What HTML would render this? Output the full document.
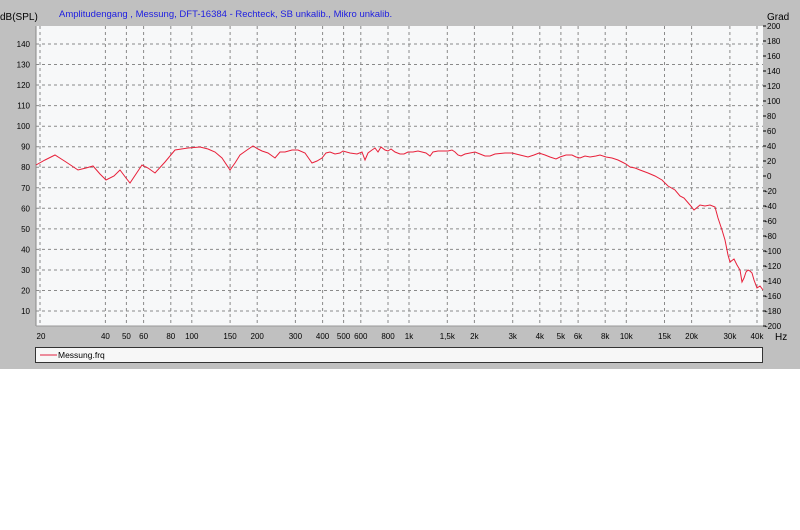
<!DOCTYPE html>
<html><head><meta charset="utf-8"><style>
body{margin:0;width:800px;height:525px;background:#fff;overflow:hidden}
svg text{font-family:"Liberation Sans",sans-serif}
</style></head><body>
<svg width="800" height="525" xmlns="http://www.w3.org/2000/svg">
<rect x="0" y="0" width="800" height="369" fill="#c0c0c0"/>
<rect x="36" y="26" width="727" height="300" fill="#f7f8f9"/>
<line x1="36" y1="26" x2="36" y2="326" stroke="#888"/>
<line x1="36" y1="326" x2="763" y2="326" stroke="#999"/>
<g stroke="#8a8a8a" stroke-dasharray="3,3" stroke-width="1">
<path d="M40,26V326M105.4,26V326M126.4,26V326M143.6,26V326M170.8,26V326M191.8,26V326M230.1,26V326M257.2,26V326M295.4,26V326M322.6,26V326M343.6,26V326M360.8,26V326M388,26V326M409,26V326M447.3,26V326M474.4,26V326M512.7,26V326M539.8,26V326M560.9,26V326M578.1,26V326M605.2,26V326M626.3,26V326M664.5,26V326M691.6,26V326M729.9,26V326M757,26V326"/>
<path d="M36,44H763M36,64.5H763M36,85H763M36,105.6H763M36,126.2H763M36,146.7H763M36,167.2H763M36,187.8H763M36,208.3H763M36,228.9H763M36,249.4H763M36,270H763M36,290.5H763M36,311H763"/>
</g>
<g font-size="8" fill="#000" text-anchor="end">
<text x="30" y="47">140</text><text x="30" y="67.5">130</text><text x="30" y="88">120</text><text x="30" y="108.6">110</text><text x="30" y="129.2">100</text><text x="30" y="149.7">90</text><text x="30" y="170.2">80</text><text x="30" y="190.8">70</text><text x="30" y="211.3">60</text><text x="30" y="231.9">50</text><text x="30" y="252.4">40</text><text x="30" y="273">30</text><text x="30" y="293.5">20</text><text x="30" y="314">10</text>
</g>
<g font-size="8" fill="#000">
<text x="767" y="29">200</text><text x="767" y="44">180</text><text x="767" y="59">160</text><text x="767" y="74">140</text><text x="767" y="89">120</text><text x="767" y="104">100</text><text x="767" y="119">80</text><text x="767" y="134">60</text><text x="767" y="149">40</text><text x="767" y="164">20</text><text x="767" y="179">0</text><text x="765" y="194">-20</text><text x="765" y="209">-40</text><text x="765" y="224">-60</text><text x="765" y="239">-80</text><text x="765" y="254">-100</text><text x="765" y="269">-120</text><text x="765" y="284">-140</text><text x="765" y="299">-160</text><text x="765" y="314">-180</text><text x="765" y="329">-200</text>
</g>
<g stroke="#000"><path d="M763,26h3M763,41h3M763,56h3M763,71h3M763,86h3M763,101h3M763,116h3M763,131h3M763,146h3M763,161h3M763,176h3M763,191h3M763,206h3M763,221h3M763,236h3M763,251h3M763,266h3M763,281h3M763,296h3M763,311h3M763,326h3"/></g>
<g font-size="8" fill="#000" text-anchor="middle">
<text x="41" y="339">20</text><text x="105.4" y="339">40</text><text x="126.4" y="339">50</text><text x="143.6" y="339">60</text><text x="170.8" y="339">80</text><text x="191.8" y="339">100</text><text x="230.1" y="339">150</text><text x="257.2" y="339">200</text><text x="295.4" y="339">300</text><text x="322.6" y="339">400</text><text x="343.6" y="339">500</text><text x="360.8" y="339">600</text><text x="388" y="339">800</text><text x="409" y="339">1k</text><text x="447.3" y="339">1,5k</text><text x="474.4" y="339">2k</text><text x="512.7" y="339">3k</text><text x="539.8" y="339">4k</text><text x="560.9" y="339">5k</text><text x="578.1" y="339">6k</text><text x="605.2" y="339">8k</text><text x="626.3" y="339">10k</text><text x="664.5" y="339">15k</text><text x="691.6" y="339">20k</text><text x="729.9" y="339">30k</text><text x="757" y="339">40k</text>
</g>
<text x="775" y="340" font-size="10" fill="#000">Hz</text>
<text x="0" y="20" font-size="10" fill="#000">dB(SPL)</text>
<text x="767" y="20" font-size="10" fill="#000">Grad</text>
<text x="59" y="17" font-size="9.5" fill="#2020e0">Amplitudengang , Messung, DFT-16384 - Rechteck, SB unkalib., Mikro unkalib.</text>
<rect x="35.5" y="347.5" width="727" height="15" fill="#f7f7f7" stroke="#333"/>
<line x1="40" y1="355" x2="57" y2="355" stroke="#e02040"/>
<text x="58" y="358" font-size="8.5" fill="#000">Messung.frq</text>
<polyline fill="none" stroke="#e8203a" stroke-width="1" points="36,165 45,160 55,155 66,162 78,170 86,168 93,166 100,174 106,180 114,176 120,170 126,178 130,183 136,174 142,165 148,168 155,173 165,162 175,150 188,148 200,147 208,149 215,152 222,158 230,170 235,163 240,155 247,150 253,146 258,149 262,151 268,153 275,158 280,152 285,152 292,150 298,150 305,153 312,163 317,161 322,158 326,153 330,152 335,154 340,153 343,151 350,153 357,154 362,152 365,160 368,153 372,150 375,148 378,152 381,147 385,150 388,151 391,149 395,152 400,154 404,154 408,152 413,152 418,151 422,152 426,153 430,156 433,152 438,151 444,151 448,151 452,150 455,152 458,155 461,156 465,154 470,153 475,152 480,154 485,156 490,156 495,154 505,153 512,153 520,155 528,157 534,155 539,153 545,155 550,157 556,159 560,157 566,155 572,155 576,157 580,158 585,156 590,157 596,156 600,155 606,157 612,158 618,160 622,162 626,164 630,167 635,168 640,170 648,173 655,176 662,180 668,186 675,190 680,196 684,198 690,205 694,210 700,205 705,206 710,205 715,207 718,218 722,230 725,240 728,255 730,262 734,259 737,265 740,270 742,282 744,278 746,272 748,270 750,271 752,273 754,280 757,288 760,286 763,290"/>
</svg>
</body></html>
